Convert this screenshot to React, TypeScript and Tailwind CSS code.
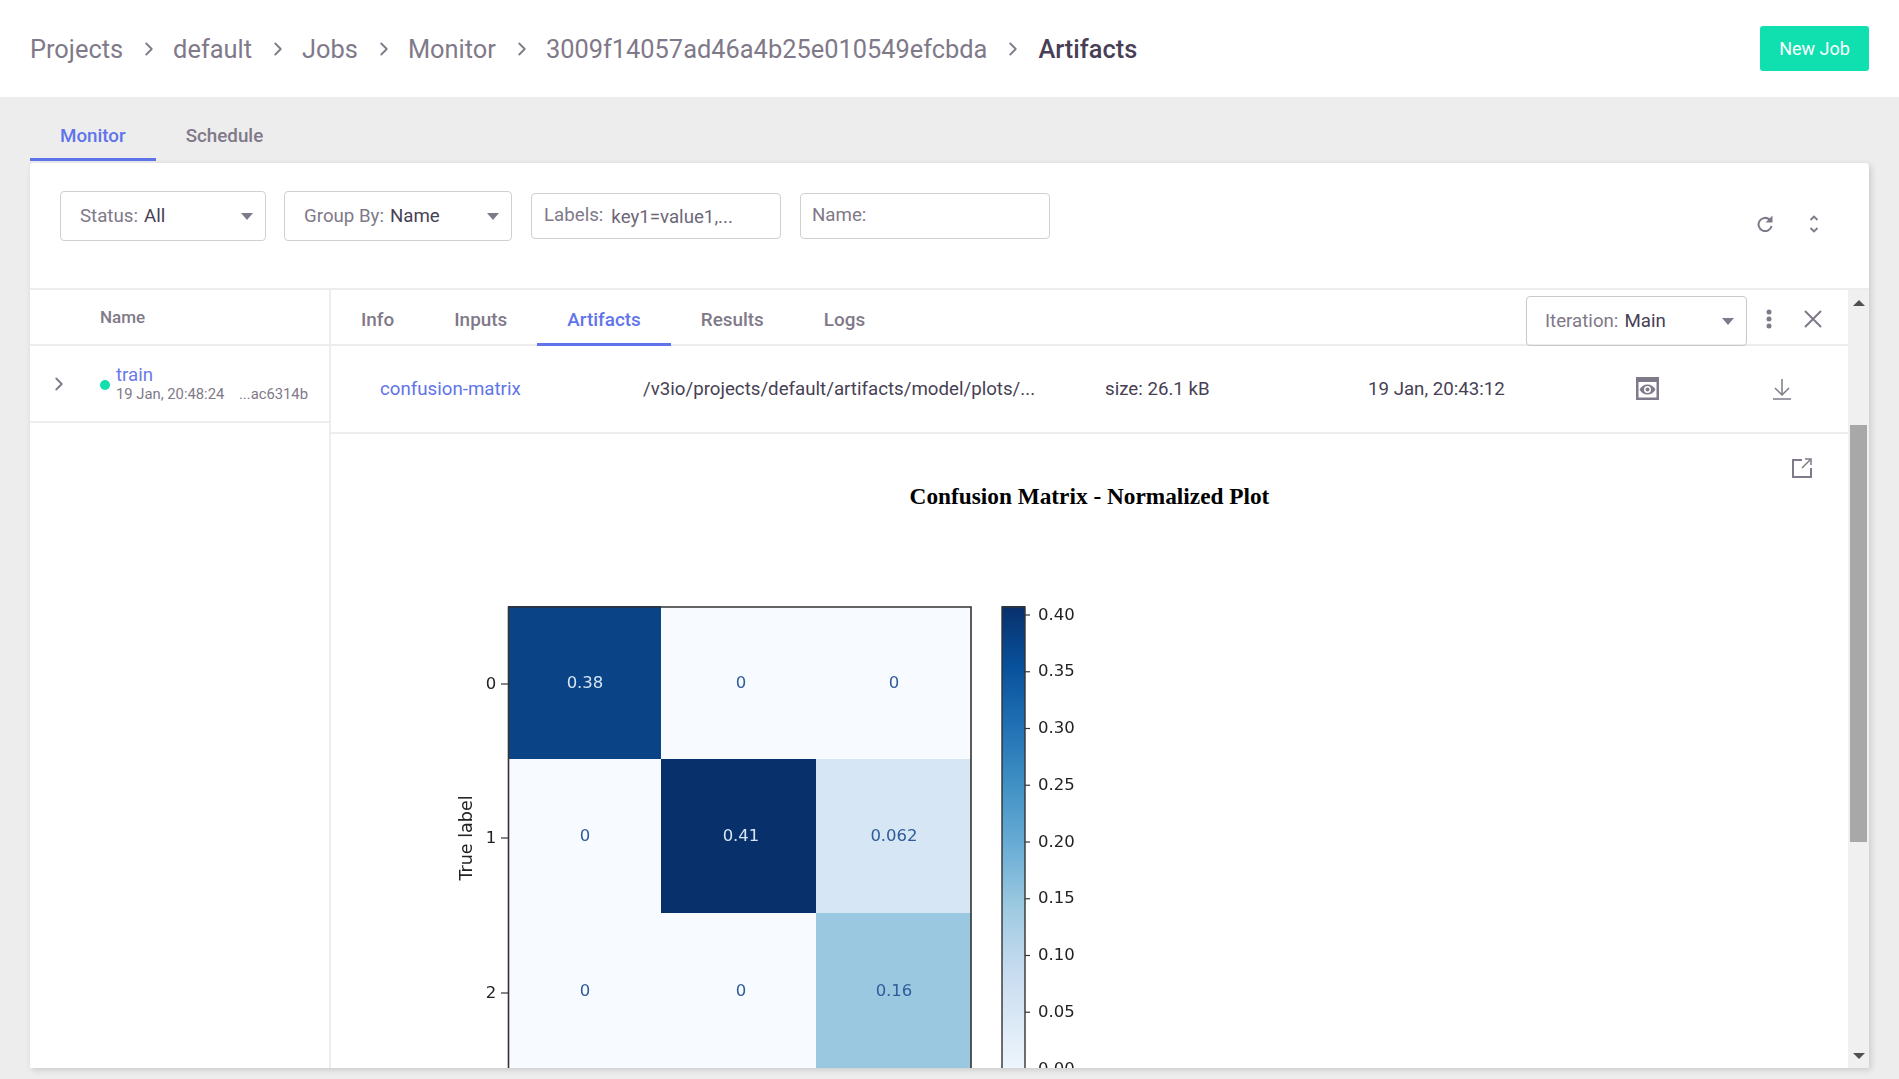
import { ChevronRight } from 'lucide-react';

const crumbs = ['Projects', 'default', 'Jobs', 'Monitor', '3009f14057ad46a4b25e010549efcbda'];
const detailTabs = ['Info', 'Inputs', 'Artifacts', 'Results', 'Logs'];

const colX = [508, 661, 816, 971];
const rowY = [606, 759, 913, 1068];
const cells = [
  { c: 0, r: 0, fill: '#0a4386', text: '0.38', ink: '#d5e5f3' },
  { c: 1, r: 0, fill: '#f7fbff', text: '0', ink: '#2f5c9a' },
  { c: 2, r: 0, fill: '#f7fbff', text: '0', ink: '#2f5c9a' },
  { c: 0, r: 1, fill: '#f7fbff', text: '0', ink: '#2f5c9a' },
  { c: 1, r: 1, fill: '#08306b', text: '0.41', ink: '#d5e5f3' },
  { c: 2, r: 1, fill: '#d6e6f4', text: '0.062', ink: '#2f5c9a' },
  { c: 0, r: 2, fill: '#f7fbff', text: '0', ink: '#2f5c9a' },
  { c: 1, r: 2, fill: '#f7fbff', text: '0', ink: '#2f5c9a' },
  { c: 2, r: 2, fill: '#9ac8e0', text: '0.16', ink: '#2f5c9a' },
];
const barTicks = ['0.40', '0.35', '0.30', '0.25', '0.20', '0.15', '0.10', '0.05', '0.00'];

function Caret({ className = '' }: { className?: string }) {
  return (
    <svg width="12" height="7" viewBox="0 0 12 7" className={className}>
      <path d="M0 0h12L6 7z" fill="#7f7989" />
    </svg>
  );
}

function Select({ label, value, width }: { label: string; value: string; width: string }) {
  return (
    <div className={`flex h-[50px] items-center rounded border border-[#d0d0d0] pl-[19px] pr-[12px] text-[18.7px] ${width}`}>
      <span className="text-[#7f7989]">{label}</span>
      <span className="ml-[6px] text-[#483f56]">{value}</span>
      <Caret className="ml-auto" />
    </div>
  );
}

function ConfusionMatrix() {
  return (
    <svg width="660" height="500" viewBox="440 590 660 500" className="mt-[82px] ml-[109px] block shrink-0 blur-[0.3px]">
      <defs>
        <linearGradient id="blues" x1="0" y1="1" x2="0" y2="0">
          <stop offset="0" stopColor="#f7fbff" />
          <stop offset="0.125" stopColor="#deebf7" />
          <stop offset="0.25" stopColor="#c6dbef" />
          <stop offset="0.375" stopColor="#9ecae1" />
          <stop offset="0.5" stopColor="#6baed6" />
          <stop offset="0.625" stopColor="#4292c6" />
          <stop offset="0.75" stopColor="#2171b5" />
          <stop offset="0.875" stopColor="#08519c" />
          <stop offset="1" stopColor="#08306b" />
        </linearGradient>
      </defs>
      <g fontFamily="'DejaVu Sans', sans-serif" fontSize="16.5">
        {cells.map((cell) => (
          <g key={`${cell.c}-${cell.r}`}>
            <rect
              x={colX[cell.c]}
              y={rowY[cell.r]}
              width={colX[cell.c + 1] - colX[cell.c]}
              height={rowY[cell.r + 1] - rowY[cell.r] + 20}
              fill={cell.fill}
            />
            <text
              x={[585, 741, 894][cell.c]}
              y={[683, 836, 991][cell.r]}
              fill={cell.ink}
              textAnchor="middle"
              dominantBaseline="middle"
            >
              {cell.text}
            </text>
          </g>
        ))}
        <path d="M508.500 1090V607H971V1090" fill="none" stroke="#333" strokeWidth="1.6" />
        {[684, 838, 993].map((y, i) => (
          <g key={y}>
            <line x1="501" x2="508" y1={y} y2={y} stroke="#333" strokeWidth="1.2" />
            <text x="491" y={y} fill="#222" textAnchor="middle" dominantBaseline="middle">
              {i}
            </text>
          </g>
        ))}
        <text
          x="467"
          y="838"
          fill="#222"
          fontSize="17.5"
          textAnchor="middle"
          dominantBaseline="middle"
          transform="rotate(-90 467 838)"
        >
          True label
        </text>
        <rect x="1002" y="606" width="23" height="484" fill="url(#blues)" />
        <path d="M1002 1090V607H1025V1090" fill="none" stroke="#333" strokeWidth="1.4" />
        {barTicks.map((label, i) => {
          const y = 615 + i * 56.75;
          return (
            <g key={label}>
              <line x1="1025" x2="1030" y1={y} y2={y} stroke="#333" strokeWidth="1.2" />
              <text x="1038" y={y} fill="#222" dominantBaseline="middle">
                {label}
              </text>
            </g>
          );
        })}
      </g>
    </svg>
  );
}

export default function App() {
  return (
    <div className="flex h-screen flex-col overflow-hidden bg-[#ededed] font-['Roboto',sans-serif] text-[#483f56]">
      {/* Breadcrumbs */}
      <header className="flex h-[97px] shrink-0 items-center bg-white pl-[30px] pr-[30px]">
        <div className="mt-[2px] flex items-center gap-[14px] text-[25.4px] text-[#7f7989]">
          {crumbs.map((crumb) => (
            <div key={crumb} className="flex items-center gap-[14px]">
              <span>{crumb}</span>
              <ChevronRight size={22} strokeWidth={2} className="translate-x-px" />
            </div>
          ))}
          <span className="translate-x-px font-medium text-[#483f56]">Artifacts</span>
        </div>
        <button className="ml-auto h-[45px] w-[109px] rounded-[3px] bg-[#10e0b0] text-[18px] text-white">New Job</button>
      </header>

      {/* Page tabs */}
      <div className="flex h-[66px] shrink-0 items-end px-[30px] pb-[2px] text-[18.8px] font-medium">
        <div className="flex h-[58px] items-center border-b-[3px] border-[#5f74ea] px-[30px] pt-[12px] text-[#5f74ea]">Monitor</div>
        <div className="flex h-[58px] items-center px-[30px] pt-[9px] text-[#7f7989]">Schedule</div>
      </div>

      {/* Card */}
      <div className="mx-[30px] mb-[11px] flex min-h-0 flex-1 flex-col rounded-t-[4px] bg-white shadow-[2px_2px_6px_rgba(0,0,0,0.15)]">
        <div className="flex h-[127px] shrink-0 items-start border-b-2 border-[#ededed] pt-[28px] pl-[30px] pr-[50px]">
          <Select label="Status:" value="All" width="w-[206px]" />
          <div className="ml-[18px]">
            <Select label="Group By:" value="Name" width="w-[228px]" />
          </div>
          <div className="ml-[19px] mt-[2px] flex h-[46px] w-[250px] items-start rounded border border-[#d0d0d0] pl-[12px] pt-[7px] text-[18.7px]">
            <span className="text-[#7f7989]">Labels:</span>
            <span className="ml-[8px] mt-[2px] text-[#6e6779]">key1=value1,...</span>
          </div>
          <div className="ml-[19px] mt-[2px] flex h-[46px] w-[250px] items-start rounded border border-[#d0d0d0] pl-[11px] pt-[7px] text-[18.7px] text-[#7f7989]">
            Name:
          </div>
          <div className="ml-auto mt-[24px] flex items-center gap-[36px] text-[#7f7989]">
            <svg width="16" height="18" viewBox="0 0 16 18" fill="none">
              <path d="M12.500 4.500A6.600 6.600 0 1 0 14.600 11" stroke="#7f7989" strokeWidth="2" />
              <path d="M8.500 7.500H15.500V0.500z" fill="#7f7989" />
            </svg>
            <svg width="10" height="18" viewBox="0 0 10 18" fill="none" stroke="#7f7989" strokeWidth="1.8">
              <path d="M1.500 5 5 1.500 8.500 5M1.500 13 5 16.500 8.500 13" />
            </svg>
          </div>
        </div>

        <div className="flex min-h-0 flex-1">
          {/* Jobs list */}
          <div className="flex w-[299px] shrink-0 flex-col">
            <div className="flex h-[56px] shrink-0 items-center border-b-2 border-[#ededed] pt-[1px] pl-[70px] text-[17px] font-medium text-[#7f7989]">
              Name
            </div>
            <div className="flex h-[77px] shrink-0 border-b-2 border-[#ededed]">
              <ChevronRight size={22} strokeWidth={2} className="ml-[18px] mt-[27px] text-[#7f7989]" />
              <span className="ml-[30px] mt-[34px] h-[10px] w-[10px] rounded-full bg-[#13deae]" />
              <div className="ml-[6px] mt-[18px] flex flex-col">
                <span className="text-[18.7px] leading-[22px] text-[#6b7ae8]">train</span>
                <div className="flex w-[192px] justify-between text-[14.8px] leading-[17px] text-[#7f7989]">
                  <span>19 Jan, 20:48:24</span>
                  <span>...ac6314b</span>
                </div>
              </div>
            </div>
          </div>

          {/* Job details */}
          <div className="flex min-w-0 flex-1 flex-col overflow-hidden border-l-2 border-[#ededed]">
            <div className="flex h-[56px] shrink-0 items-end border-b-2 border-[#ededed] text-[18.9px] font-medium">
              {detailTabs.map((tab) => (
                <div
                  key={tab}
                  className={
                    tab === 'Artifacts'
                      ? 'mb-[-2px] flex h-[56px] items-center border-b-[3px] border-[#5f74ea] px-[30px] pt-[7px] text-[#5f74ea]'
                      : 'flex h-[54px] items-center px-[30px] pt-[6px] text-[#7f7989]'
                  }
                >
                  {tab}
                </div>
              ))}
              <div className="mb-[-2px] ml-auto flex h-[50px] w-[221px] items-center self-end rounded border border-[#c9c9c9] pl-[18px] pr-[12px] text-[18.7px] font-normal">
                <span className="text-[#7f7989]">Iteration:</span>
                <span className="ml-[6px] text-[#483f56]">Main</span>
                <Caret className="ml-auto" />
              </div>
              <div className="flex h-[54px] w-[101px] items-center pt-[4px]">
                <svg width="6" height="20" viewBox="0 0 6 20" className="ml-[19px]" fill="#7f7989">
                  <circle cx="3" cy="3" r="2.500" />
                  <circle cx="3" cy="10" r="2.500" />
                  <circle cx="3" cy="17" r="2.500" />
                </svg>
                <svg width="18" height="18" viewBox="0 0 18 18" className="ml-[32px]" fill="none" stroke="#7f7989" strokeWidth="2">
                  <path d="M1 1l16 16M17 1 1 17" />
                </svg>
              </div>
            </div>

            <div className="flex h-[88px] shrink-0 items-center border-b-2 border-[#ededed] text-[18.7px]">
              <span className="ml-[49px] w-[263px] text-[#5f74ea]">confusion-matrix</span>
              <span className="w-[462px] text-[#483f56]">/v3io/projects/default/artifacts/model/plots/...</span>
              <span className="w-[263px] text-[#483f56]">size: 26.1 kB</span>
              <span className="w-[268px] text-[#483f56]">19 Jan, 20:43:12</span>
              {/* eye in a window frame */}
              <svg width="23" height="23" viewBox="0 0 23 23" fill="#7f7989" className="mb-[2px]">
                <path fillRule="evenodd" d="M0 0h23v23H0zM2.500 5V20.500h18V5z" />
                <path
                  fillRule="evenodd"
                  d="M11.500 7.500c3.500 0 6.500 2 8 5-1.500 3-4.500 5-8 5s-6.500-2-8-5c1.500-3 4.500-5 8-5zm0 1.500a3.500 3.500 0 1 0 0 7 3.500 3.500 0 0 0 0-7z"
                />
                <circle cx="11.500" cy="12.500" r="2" />
              </svg>
              <svg width="20" height="21" viewBox="0 0 20 21" className="ml-[113px]" fill="none" stroke="#7f7989" strokeWidth="1.500">
                <path d="M10 0v16M3 9l7 7 7-7M1 20h18" />
              </svg>
            </div>

            <div className="relative min-h-0 flex-1 overflow-hidden">
              <svg width="20" height="20" viewBox="0 0 20 20" className="absolute right-[36px] top-[24px]" fill="none" stroke="#7f7989" strokeWidth="2">
                <path d="M10 2H1v17h18V10" />
                <path d="M10 10l8-8M13 1h6v6" strokeWidth="1.500" />
              </svg>
              <h2 className="mt-[49px] text-center font-['Liberation_Serif',serif] text-[23.300px] font-bold leading-[26px] text-black">
                Confusion Matrix - Normalized Plot
              </h2>
              <div className="-mt-px">
                <ConfusionMatrix />
              </div>
            </div>
          </div>

          {/* Scrollbar */}
          <div className="flex w-[21px] shrink-0 flex-col items-center bg-[#f0f0f0]">
            <svg width="12" height="6" viewBox="0 0 12 6" className="mt-[10px]">
              <path d="M6 0l6 6H0z" fill="#505050" />
            </svg>
            <div className="mt-[119px] h-[417px] w-[17px] bg-[#a8a8a8]" />
            <svg width="12" height="6" viewBox="0 0 12 6" className="mt-auto mb-[9px]">
              <path d="M6 6 0 0h12z" fill="#505050" />
            </svg>
          </div>
        </div>
      </div>
    </div>
  );
}
